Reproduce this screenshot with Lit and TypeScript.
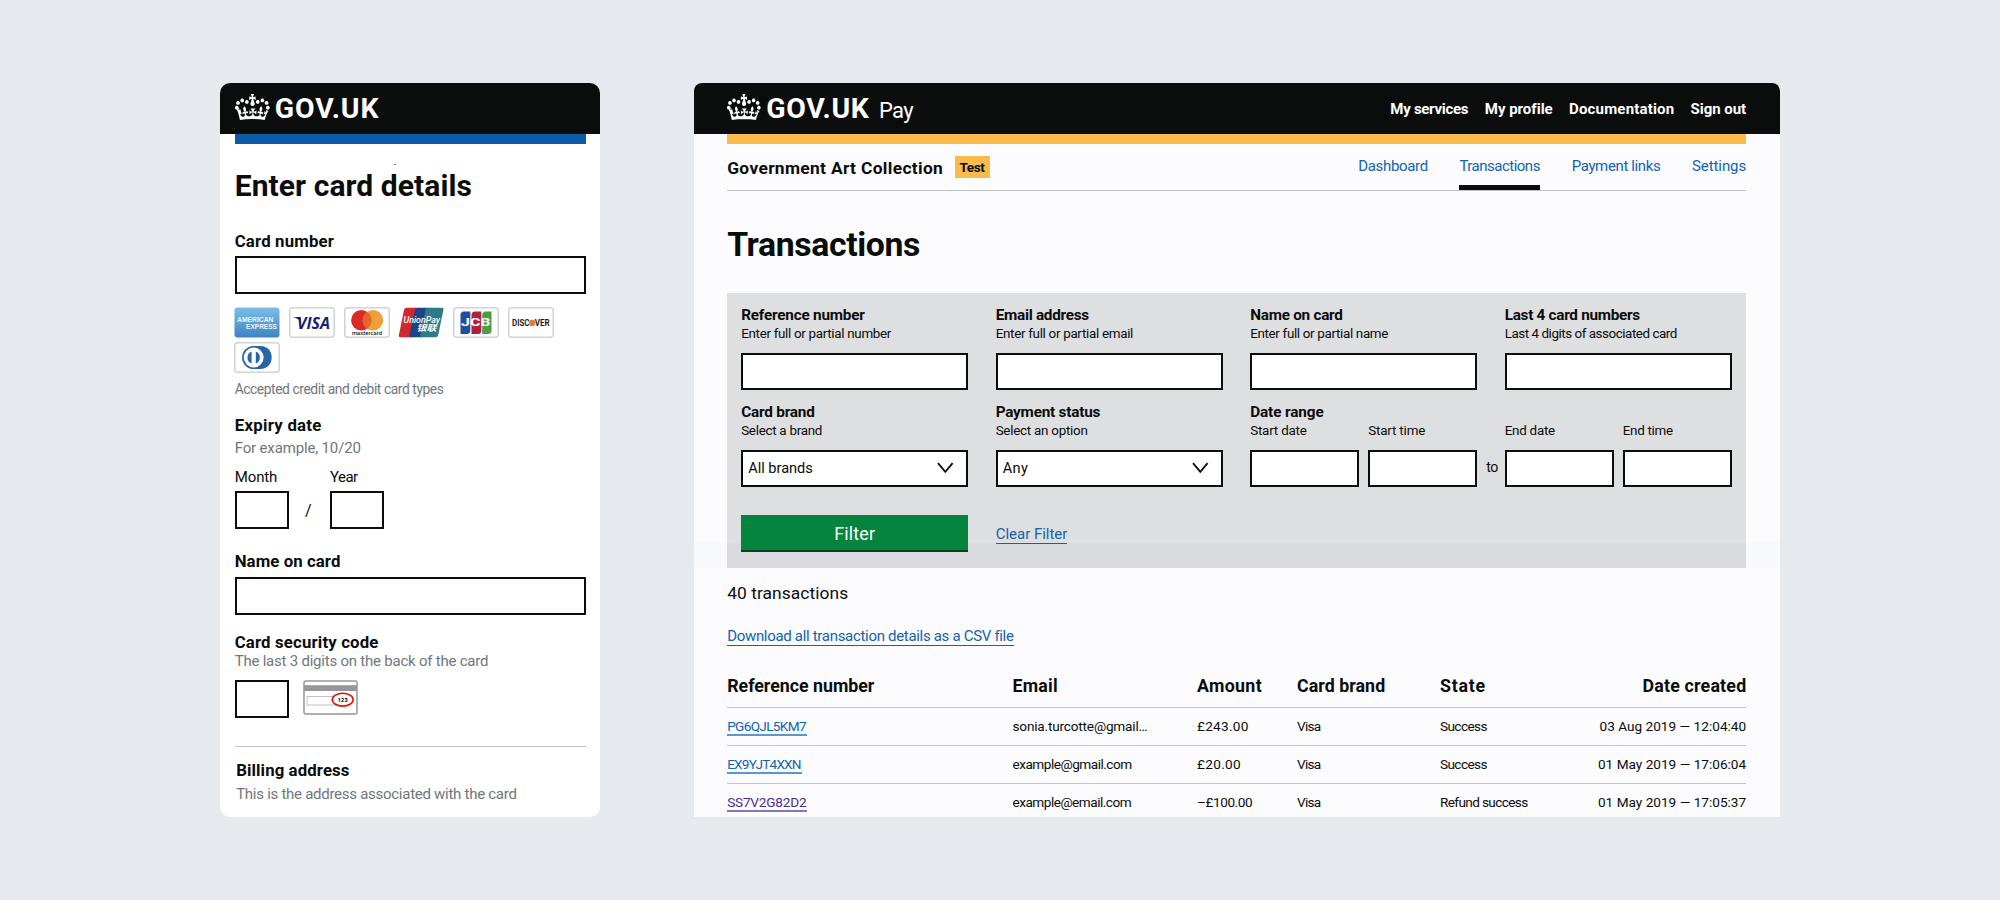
import { LitElement, html, css, svg } from "lit";
import { customElement, property } from "lit/decorators.js";

/** A run of text whose tracking is adjusted so that it spans `w` pixels. */
@customElement("fit-text")
class FitText extends LitElement {
  @property({ type: Number }) w = 0;
  @property() text = "";
  static styles = css`
    :host { display: inline-block; white-space: nowrap; }
  `;
  render() {
    return html`<span>${this.text}</span>`;
  }
  updated() {
    const span = this.renderRoot.querySelector("span") as HTMLElement;
    span.style.letterSpacing = "0px";
    const natural = span.getBoundingClientRect().width;
    const gaps = Math.max(1, this.text.length - 1);
    const spacing = (this.w + 0.7 - natural) / gaps;
    span.style.letterSpacing = `${spacing.toFixed(3)}px`;
    this.style.marginRight = `${(-spacing).toFixed(3)}px`;
  }
}

const t = (text: string, w: number) => html`<fit-text .text=${text} .w=${w}></fit-text>`;

const crown = (w: number) => html`<svg class="crown" width=${w} height="26" viewBox="0 4 36 26" preserveAspectRatio="none" fill="#fff">
  <path d="M6.7 12.2c1 .4 2.1-.1 2.5-1s-.1-2.1-1-2.5c-1-.4-2.1.1-2.5 1-.4 1 0 2.1 1 2.5m-4.3 2.5c1 .4 2.1-.1 2.5-1s-.1-2.1-1-2.5c-1-.4-2.1.1-2.5 1-.5 1 0 2.1 1 2.5m-1.3 4.8c1 .4 2.1-.1 2.5-1 .4-1-.1-2.1-1-2.5-1-.4-2.1.1-2.5 1-.4 1 0 2.1 1 2.5m10.4-5.8c1 .4 2.1-.1 2.5-1s-.1-2.1-1-2.5c-1-.4-2.1.1-2.5 1s0 2.1 1 2.5m17.4-1.5c-1 .4-2.1-.1-2.5-1s.1-2.1 1-2.5c1-.4 2.1.1 2.5 1 .5 1 0 2.1-1 2.5m4.3 2.5c-1 .4-2.1-.1-2.5-1s.1-2.1 1-2.5c1-.4 2.1.1 2.5 1 .5 1 0 2.1-1 2.5m1.3 4.8c-1 .4-2.1-.1-2.5-1-.4-1 .1-2.1 1-2.5 1-.4 2.1.1 2.5 1 .4 1 0 2.1-1 2.5m-10.4-5.8c-1 .4-2.1-.1-2.5-1s.1-2.1 1-2.5c1-.4 2.1.1 2.5 1s0 2.1-1 2.5m-5.3-4.9 2.4 1.3V6.5l-2.4.8c-.1-.1-.1-.2-.2-.3s1-3 1-3h-3.4l1 3c-.1.1-.2.2-.2.3-.1.1-2.4-.7-2.4-.7v3.5L17 8.8c.1.1.2.2.3.2l-1.4 4.2c-.1.2-.1.4-.1.6 0 1.1.8 2 1.9 2.2h.7c1-.2 1.9-1.1 1.9-2.1 0-.2 0-.4-.1-.6l-1.4-4.2c-.1 0 0-.1 0-.3m-1 20.3c4.6 0 8.9.3 12.8.9 1.1-4.6 2.4-7.2 3.8-9.1l-2.6-.9c.3 1.3.3 1.9 0 2.8-.4-.4-.8-1.2-1.1-2.4l-1.2 4.2c.8-.5 1.4-.9 2-.9-1.2 2.6-2.7 3.2-3.6 3-1.2-.2-1.7-1.3-1.5-2.2.3-1.3 1.6-1.6 2.2-.1 1.2-2.4-.8-3.1-2.1-2.4 1.9-1.9 2.2-3.6.6-5.7-2.2 1.7-2.2 3.3-1.2 5.6-1.3-1.5-3.3-.7-2.5 1.7.9-1.4 2.1-.5 2 .8-.2 1.2-1.7 2.1-3.7 1.9-2.8-.2-2.9-2.2-2.9-3.7.7-.1 1.9.5 3 2l.4-4.4c-1.1 1.1-2.1 1.4-3.2 1.4.4-1.2 2.1-3.1 2.1-3.1h-5.4s1.7 1.9 2.1 3.1c-1.1 0-2.1-.2-3.2-1.4l.4 4.4c1.1-1.5 2.3-2.1 3-2-.1 1.6-.2 3.5-2.9 3.7-1.9.2-3.5-.7-3.7-1.9-.2-1.3 1-2.2 1.9-.8.7-2.4-1.3-3.1-2.6-1.7 1-2.3 1-4-1.2-5.6-1.6 2.1-1.3 3.8.6 5.7-1.3-.7-3.2 0-2.1 2.4.6-1.5 1.9-1.1 2.2.1.2.9-.4 1.9-1.5 2.2-1 .2-2.5-.4-3.6-3 .6 0 1.3.3 2 .9L5.1 18.2c-.3 1.1-.7 1.9-1.1 2.4-.3-.8-.2-1.5 0-2.8l-2.6.9c1.4 1.9 2.7 6.5 3.7 11.2 3.9-.6 8.2-.9 12.8-.9"/>
</svg>`;

const frame = svg`<rect x=".75" y=".75" width="44.5" height="29.5" rx="3" fill="#fff" stroke="#d2d3d4" stroke-width="1.5"/>`;
const brand = (label: string, body: unknown) =>
  html`<svg class="brand" width="46" height="31" viewBox="0 0 46 31" role="img" aria-label=${label}>${body}</svg>`;

const brands = [
  brand("American Express", svg`
    <defs><linearGradient id="ax" x1="0" y1="0" x2="0" y2="1"><stop offset="0" stop-color="#7dbde6"/><stop offset="1" stop-color="#3b84c4"/></linearGradient></defs>
    <rect x=".5" y=".5" width="45" height="30" rx="3" fill="url(#ax)"/>
    <g fill="#e9f5fd" font-weight="700" font-size="7.8" font-family="Liberation Sans, sans-serif">
      <text x="3" y="14.6" textLength="36.5" lengthAdjust="spacingAndGlyphs">AMERICAN</text>
      <text x="12" y="22.4" textLength="31" lengthAdjust="spacingAndGlyphs">EXPRESS</text>
    </g>`),
  brand("Visa", svg`${frame}
    <text x="8" y="21.8" font-size="16.5" font-weight="700" font-style="italic" fill="#1b1f6e" font-family="Open Sans, sans-serif" textLength="33" lengthAdjust="spacingAndGlyphs">VISA</text>
    <path d="M3.8 10h6.6l1.6 5.5c-1.6-2.9-4.5-4.9-8.2-5.5z" fill="#1b1f6e"/>`),
  brand("Mastercard", svg`${frame}
    <circle cx="17.3" cy="13.2" r="10.2" fill="#dc2b27"/><circle cx="29" cy="13.2" r="10.2" fill="#eba03a"/>
    <path d="M23.15 4.8a10.2 10.2 0 0 1 0 16.8a10.2 10.2 0 0 1 0-16.8z" fill="#e8642b"/>
    <text x="8" y="28.2" font-size="5.6" font-weight="500" fill="#222" textLength="30" lengthAdjust="spacingAndGlyphs">mastercard</text>`),
  brand("UnionPay", svg`
    <path d="M8.5.8H21L14.8 30.2H2.6Q.4 30.2.9 28L6 3Q6.5.8 8.5.8z" fill="#d3272f"/>
    <path d="M20.5.8H31L24.8 30.2H11.6Q11 30.2 11.4 28L16.9 3Q17.5.8 20.5.8z" fill="#1d4486"/>
    <path d="M30.5.8H43.5Q46 .8 45.4 3L40.2 28Q39.7 30.2 37.5 30.2H22.2Q22 30.2 22.3 28L27.5 3Q28 .8 30.5.8z" fill="#2f7a86"/>
    <g fill="#fff" font-style="italic">
      <text x="5.5" y="15.6" font-size="9.5" font-weight="500" textLength="36.5" lengthAdjust="spacingAndGlyphs">UnionPay</text>
      <text x="18.5" y="24" font-size="8.5" font-weight="700" font-family="Noto Sans CJK SC, sans-serif" textLength="20" lengthAdjust="spacingAndGlyphs">银联</text>
    </g>`),
  brand("JCB", svg`${frame}
    <path d="M11 4.5h6.3v19q0 3.5-3.5 3.5H7.5V8q0-3.5 3.5-3.5z" fill="#1f4f9e"/>
    <path d="M22 4.5h6.3v19q0 3.5-3.5 3.5h-6.3V8q0-3.5 3.5-3.5z" fill="#b3203c"/>
    <path d="M33 4.5h5.5v19q0 3.5-3.5 3.5h-5.8V8q0-3.5 3.8-3.5z" fill="#4c9c40"/>
    <text x="8" y="19.4" font-size="10.5" font-weight="700" fill="#fff" textLength="29.5" lengthAdjust="spacingAndGlyphs">JCB</text>`),
  brand("Discover", svg`${frame}
    <g font-size="8.4" font-weight="700" fill="#231f20">
      <text x="4" y="18.9" textLength="17.5" lengthAdjust="spacingAndGlyphs">DISC</text>
      <text x="26.7" y="18.9" textLength="15" lengthAdjust="spacingAndGlyphs">VER</text>
    </g>
    <circle cx="24.2" cy="15.9" r="3.1" fill="#e9792b"/>`),
  brand("Diners Club", svg`${frame}
    <path d="M20 4h6.5c7 0 11.2 5 11.2 11.5S33 27 26.5 27H20z" fill="#2565a8"/>
    <circle cx="19.7" cy="15.5" r="11.6" fill="#2565a8"/><circle cx="19.7" cy="15.5" r="9.9" fill="#fff"/>
    <path d="M17.6 9.6v11.8a6.3 6.3 0 0 1 0-11.8zM21.8 9.6a6.3 6.3 0 0 1 0 11.8z" fill="#2565a8"/>`),
];

const cvc = html`<svg class="cvc" width="55" height="35" viewBox="0 0 55 35">
  <rect x="1" y="1" width="53" height="33" rx="2" fill="#fff" stroke="#979797" stroke-width="1.5"/>
  <rect x="1" y="5.2" width="53" height="5.8" fill="#979797"/>
  <rect x="4" y="16.5" width="30" height="8.5" fill="#fff" stroke="#bbb" stroke-width=".9"/>
  <ellipse cx="39.7" cy="19.7" rx="10.4" ry="6.4" fill="#fff" stroke="#e31010" stroke-width="1.6"/>
  <text x="34.8" y="21.6" font-size="5.5" font-weight="700" textLength="9.8">123</text>
</svg>`;

const chevron = html`<svg width="17" height="12" viewBox="0 0 17 12" fill="none" stroke="#0b0c0c" stroke-width="1.8"><path d="M1 1.2l7.3 8.6L15.6 1.2"/></svg>`;

@customElement("app-root")
class AppRoot extends LitElement {
  static styles = css`
    :host {
      display: flex; align-items: flex-start; gap: 93.7px; box-sizing: border-box;
      width: 2000px; height: 900px; padding: 83.4px 0 0 220.4px; overflow: hidden;
      background: #e6e9ee; color: #0b0c0c;
      font-family: Roboto, "Liberation Sans", sans-serif; font-size: 15px; line-height: 20px;
    }
    * { box-sizing: border-box; }
    svg { display: block; flex: none; }
    fit-text { vertical-align: top; }
    .panel { height: 733.5px; overflow: hidden; }
    .phone { width: 379.6px; background: #fff; border-radius: 10px; }
    .desk { width: 1086px; background: linear-gradient(#fcfcfe 459px, #f7f9fd 459px 485px, #fcfcfe 485px); border-radius: 8px 8px 0 0; }
    .top { height: 50.8px; background: #0b0d0c; color: #fff; display: flex; align-items: center; }
    .phone .top { padding-left: 14.4px; }
    .desk .top { padding: 0 33.5px; }
    .crown { margin-top: -4px; }
    .gov { font-weight: 700; font-size: 28.4px; margin-left: 5px; }
    .product { font-size: 22px; margin: 4px 0 0 10px; }
    .links { display: flex; gap: 16.3px; margin-left: auto; font-weight: 700; }
    .body { padding: 0 14px 0 14.3px; display: flex; flex-direction: column; }
    .bar { height: 9.5px; background: #0b5ca5; }
    .desk .bar { background: #fabb4b; }
    .row { display: flex; }
    h1, h2, p { margin: 0; font-weight: inherit; font-size: inherit; }
    .speck { width: 2px; height: 1px; background: #777; margin: 20px 0 0 159px; }
    .title { font-weight: 700; font-size: 30px; line-height: 36px; margin-top: 3px; }
    .label { font-weight: 700; font-size: 16.8px; }
    .hint { color: #6f777b; }
    .small { font-size: 13.8px; margin-top: 6px; }
    .field { height: 38px; border: 2px solid #0b0c0c; background: #fff; }
    .short { width: 54.3px; }
    .brands { display: flex; flex-wrap: wrap; gap: 4px 8.7px; margin: 13px 0 0 -.5px; width: 330px; }
    .dates { margin-top: 8.3px; }
    .dates .field { margin-top: 4.7px; }
    .slash { width: 41px; margin-top: 34px; padding-left: 16px; font-size: 16px; }
    .rule { height: 1px; background: #bfc1c3; margin-top: 28px; }
    .billing { padding-left: 1.5px; margin-top: 13px; }
    .g28 { margin-top: 27.3px; } .g16 { margin-top: 15.3px; } .g22 { margin-top: 21.8px; } .g17 { margin-top: 17px; }
    .g5 { margin-top: 5.5px; } .g3 { margin-top: 3.7px; }
    .tight { line-height: 19px; }
    .code { margin-top: 9.6px; gap: 14.5px; }

    .main { padding: 0 33.5px; }
    .service { display: flex; height: 47px; border-bottom: 1px solid #bfc1c3; }
    .name { font-weight: 700; font-size: 17.4px; padding-top: 14.4px; }
    .tag { background: #fabb4b; font-weight: 700; font-size: 13.6px; line-height: 22px; height: 22px; width: 35px; padding-left: 4.5px; margin: 12.8px 0 0 12px; }
    .tabs { display: flex; margin-left: auto; color: #1263ae; gap: 31.3px; }
    .tabs div { padding-top: 12.3px; height: 46px; }
    .tabs .on { border-bottom: 5px solid #0b0c0c; }
    .big { font-size: 33.8px; font-weight: 700; line-height: 40px; margin-top: 34.3px; }
    .filters { margin-top: 28px; height: 275.5px; padding: 12px 13.5px 0 14px; background: linear-gradient(#dedfe1 250px, #dadbdf 250px); display: grid; grid-template-columns: repeat(4, 227px); column-gap: 27.5px; grid-template-rows: 97px 113px 37px; }
    .filters .label { font-size: 15.3px; }
    .filters .note { font-size: 13.4px; line-height: 18px; height: 18px; }
    .filters .field { height: 37px; margin-top: 10px; display: flex; align-items: center; justify-content: space-between; padding: 0 12px 0 5px; font-size: 14.6px; }
    .filters .field fit-text { margin-top: -1px; }
    .pair { display: grid; grid-template-columns: 109px 109px; column-gap: 9px; align-content: start; }
    .pair .label { grid-column: 1 / 3; height: 20px; }
    .range { display: grid; grid-column: 3 / 5; grid-template-columns: 227px 27.5px 227px; }
    .to { font-size: 14.2px; padding: 55.5px 0 0 9px; }
    .btn { background: #04843c; box-shadow: inset 0 -2px #0a3f22; color: #fff; text-align: center; font-size: 17.8px; line-height: 37px; }
    .link { color: #1263ae; display: inline-block; box-shadow: inset 0 -1px #1263ae; }
    .clear { padding-top: 9px; }
    .count { font-size: 17.4px; margin-top: 15px; }
    .csv { margin-top: 22.2px; }
    .grid { display: grid; grid-template-columns: 285.3px 184.5px 100px 143px 150px 1fr; align-items: center; height: 38px; border-top: 1.5px solid #c4c5c8; font-size: 13.6px; line-height: 19px; }
    .head { height: 42px; border: 0; margin-top: 19px; font-weight: 700; font-size: 17.8px; }
    .ref { box-shadow: inset 0 -2px #5b96cd; line-height: 18px; height: 19px; vertical-align: top; }
    .visited { color: #4c2c92; box-shadow: inset 0 -2px #8a74ba; }
    .end { text-align: right; }
    .end fit-text { text-align: left; }
  `;

  filter(label: [string, number], note: [string, number], value?: [string, number]) {
    return html`<div>
      <div class="label">${t(...label)}</div>
      <div class="note">${t(...note)}</div>
      <div class="field">${value ? html`${t(...value)}${chevron}` : ""}</div>
    </div>`;
  }

  pair(title: [string, number] | null, a: [string, number], b: [string, number]) {
    return html`<div class="pair">
      <div class="label">${title ? t(...title) : ""}</div>
      <div class="note">${t(...a)}</div><div class="note">${t(...b)}</div>
      <div class="field"></div><div class="field"></div>
    </div>`;
  }

  record(ref: [string, number], cells: [string, number][], visited = false) {
    return html`<div class="grid">
      <div><span class="link ref ${visited ? "visited" : ""}">${t(...ref)}</span></div>
      ${cells.map((c, i) => html`<div class=${i === cells.length - 1 ? "end" : ""}>${t(...c)}</div>`)}
    </div>`;
  }

  render() {
    return html`
      <section class="panel phone">
        <div class="top">${crown(35)}<div class="gov">${t("GOV.UK", 103)}</div></div>
        <div class="body">
          <div class="bar"></div>
          <div class="speck"></div>
          <h1 class="title">${t("Enter card details", 236.5)}</h1>
          <div class="label g28">${t("Card number", 98.5)}</div>
          <div class="field g5"></div>
          <div class="brands">${brands}</div>
          <p class="hint small">${t("Accepted credit and debit card types", 208.5)}</p>
          <div class="label g16">${t("Expiry date", 86)}</div>
          <p class="hint g3">${t("For example, 10/20", 125.5)}</p>
          <div class="row dates">
            <div>${t("Month", 42)}<div class="field short"></div></div>
            <div class="slash">/</div>
            <div>${t("Year", 27.5)}<div class="field short"></div></div>
          </div>
          <div class="label g22">${t("Name on card", 105)}</div>
          <div class="field g5"></div>
          <div class="label g17">${t("Card security code", 143)}</div>
          <p class="hint tight">${t("The last 3 digits on the back of the card", 253)}</p>
          <div class="row code"><div class="field short"></div>${cvc}</div>
          <div class="rule"></div>
          <div class="billing">
            <div class="label">${t("Billing address", 112.5)}</div>
            <p class="hint g3">${t("This is the address associated with the card", 280)}</p>
          </div>
        </div>
      </section>

      <section class="panel desk">
        <div class="top">
          ${crown(34)}<div class="gov">${t("GOV.UK", 102)}</div><div class="product">${t("Pay", 34)}</div>
          <nav class="links">${t("My services", 77.5)}${t("My profile", 67)}${t("Documentation", 104.5)}${t("Sign out", 55)}</nav>
        </div>
        <div class="main">
          <div class="bar"></div>
          <div class="service">
            <div class="name">${t("Government Art Collection", 215)}</div>
            <div class="tag">${t("Test", 24.8)}</div>
            <nav class="tabs">
              <div>${t("Dashboard", 69.2)}</div><div class="on">${t("Transactions", 80.3)}</div>
              <div>${t("Payment links", 88.3)}</div><div>${t("Settings", 53.5)}</div>
            </nav>
          </div>
          <h1 class="big">${t("Transactions", 192.5)}</h1>
          <div class="filters">
            ${this.filter(["Reference number", 123], ["Enter full or partial number", 149.5])}
            ${this.filter(["Email address", 92.8], ["Enter full or partial email", 137])}
            ${this.filter(["Name on card", 92], ["Enter full or partial name", 137.5])}
            ${this.filter(["Last 4 card numbers", 134.8], ["Last 4 digits of associated card", 172])}
            ${this.filter(["Card brand", 73], ["Select a brand", 80.5], ["All brands", 64])}
            ${this.filter(["Payment status", 104], ["Select an option", 91.5], ["Any", 24.5])}
            <div class="range">
              ${this.pair(["Date range", 72.8], ["Start date", 56], ["Start time", 56.5])}
              <div class="to">${t("to", 11.5)}</div>
              ${this.pair(null, ["End date", 49.8], ["End time", 49.8])}
            </div>
            <div class="btn">${t("Filter", 40)}</div>
            <div class="clear"><span class="link">${t("Clear Filter", 71)}</span></div>
          </div>
          <p class="count">${t("40 transactions", 120.3)}</p>
          <p class="csv"><span class="link">${t("Download all transaction details as a CSV file", 285.5)}</span></p>
          <div class="grid head">
            <div>${t("Reference number", 146.5)}</div><div>${t("Email", 44.5)}</div><div>${t("Amount", 64)}</div>
            <div>${t("Card brand", 87.5)}</div><div>${t("State", 44.5)}</div><div class="end">${t("Date created", 103)}</div>
          </div>
          ${this.record(["PG6QJL5KM7", 78.7], [["sonia.turcotte@gmail…", 134.5], ["£243.00", 50.8], ["Visa", 23.5], ["Success", 46.8], ["03 Aug 2019 — 12:04:40", 146]])}
          ${this.record(["EX9YJT4XXN", 73.7], [["example@gmail.com", 119], ["£20.00", 43], ["Visa", 23.5], ["Success", 46.8], ["01 May 2019 — 17:06:04", 147.5]])}
          ${this.record(["SS7V2G82D2", 78.7], [["example@email.com", 118.5], ["–£100.00", 55], ["Visa", 23.5], ["Refund success", 87.5], ["01 May 2019 — 17:05:37", 147.5]], true)}
        </div>
      </section>
    `;
  }
}
